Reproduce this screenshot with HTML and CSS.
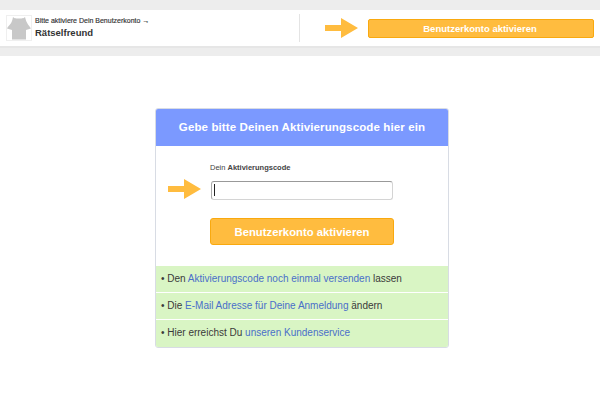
FILE: index.html
```
<!DOCTYPE html>
<html lang="de">
<head>
<meta charset="utf-8">
<title>Benutzerkonto aktivieren</title>
<link rel="stylesheet" href="styles.css">
</head>
<body>
<header class="topband">
  <div class="bar">
    <div class="user">
      <div class="avatar">
        <svg viewBox="0 0 24 24" width="24" height="24"><path fill="#c8c8c8" d="M6 1c1 1 2 1.5 6 1.5S17 2 18 1q1 5 3 7.5t3 4l-5 1.5v9.500H5V14L0 12.500q1-2 3-4T6 1z"/></svg>
      </div>
      <div class="user-text">
        <div class="notice">Bitte aktiviere Dein Benutzerkonto →</div>
        <div class="name">Rätselfreund</div>
      </div>
    </div>
    <div class="cta">
      <svg class="arrow" viewBox="0 0 33 20" width="33" height="20"><path fill="#ffbc3f" d="M0 7h16V0l17 10-17 10v-7H0z"/></svg>
      <button class="btn btn-small" type="button">Benutzerkonto aktivieren</button>
    </div>
  </div>
</header>
<main class="page">
  <section class="card">
    <h1 class="card-title">Gebe bitte Deinen Aktivierungscode hier ein</h1>
    <form class="card-form">
      <label class="label" for="code">Dein <b>Aktivierungscode</b></label>
      <div class="field-row">
        <svg class="arrow field-arrow" viewBox="0 0 33 20" width="33" height="20"><path fill="#ffbc3f" d="M0 7h16V0l17 10-17 10v-7H0z"/></svg>
        <div class="input" id="code"><span class="caret"></span></div>
      </div>
      <button class="btn btn-large" type="button">Benutzerkonto aktivieren</button>
    </form>
    <ul class="links">
      <li>• Den <a href="#">Aktivierungscode noch einmal versenden</a> lassen</li>
      <li>• Die <a href="#">E-Mail Adresse für Deine Anmeldung</a> ändern</li>
      <li>• Hier erreichst Du <a href="#">unseren Kundenservice</a></li>
    </ul>
  </section>
</main>
</body>
</html>
```
FILE: styles.css
```
* { box-sizing: border-box; }
html, body { margin: 0; padding: 0; }
body {
  width: 600px;
  height: 400px;
  overflow: hidden;
  background: #fff;
  font-family: "Liberation Sans", Arial, sans-serif;
  color: #333;
}
.topband {
  background: #ededed;
  padding-top: 10px;
  height: 56px;
}
.bar {
  height: 38px;
  background: #fff;
  display: flex;
  align-items: center;
  border-bottom: 2px solid #e6e6e6;
}
.user {
  width: 300px;
  height: 28px;
  display: flex;
  align-items: center;
  padding-left: 6px;
  border-right: 1px solid #e4e4e4;
}
.avatar {
  width: 26px;
  height: 26px;
  border: 1px solid #efefef;
  display: flex;
  align-items: center;
  justify-content: center;
  flex: none;
}
.avatar svg { display: block; width: 24px; height: 24px; }
.user-text { margin-left: 3px; padding-bottom: 2px; }
.notice { font-size: 7px; line-height: 9px; color: #333; -webkit-text-stroke: 0.15px #333; }
.name { font-size: 9.5px; line-height: 11px; font-weight: 700; color: #333; margin-top: 2px; }
.cta {
  display: flex;
  align-items: center;
  padding-left: 25px;
}
.arrow { display: block; flex: none; }
.btn {
  font-family: inherit;
  font-weight: 700;
  color: #fff;
  background: #ffbc3f;
  border: 1px solid #f9a90f;
  padding: 0;
}
.btn-small {
  width: 226px;
  height: 19px;
  margin-left: 10px;
  padding-right: 2px;
  font-size: 9.5px;
  border-radius: 2px;
}
.page { display: flex; justify-content: center; padding-top: 52px; }
.card {
  width: 294px;
  border: 1px solid #d8dce4;
  border-radius: 3px;
  overflow: hidden;
  background: #fff;
  margin-left: 4px;
}
.card-title {
  margin: 0;
  height: 37px;
  background: #7b99ff;
  color: #fff;
  font-size: 11.5px;
  line-height: 37px;
  font-weight: 700;
  text-align: center;
  letter-spacing: 0.12px;
}
.card-form {
  display: flex;
  flex-direction: column;
  padding: 17px 0 0 11px;
  height: 120px;
}
.label {
  margin-left: 43px;
  font-size: 7.5px;
  line-height: 9px;
  font-weight: 400;
  color: #444;
}
.field-row {
  display: flex;
  align-items: center;
  margin-top: 8px;
}
.field-arrow { margin-left: 1px; position: relative; top: -1px; }
.input {
  width: 182px;
  height: 19px;
  margin-left: 10px;
  border: 1px solid #d4d4d4;
  border-top-color: #999;
  border-left-color: #aaa;
  border-radius: 3px;
  display: flex;
  align-items: center;
  padding-left: 2px;
}
.caret { display: block; width: 1px; height: 12px; background: #222; }
.btn-large {
  width: 184px;
  height: 27px;
  margin: 18px 0 0 43px;
  font-size: 11.3px;
  border-radius: 3px;
}
.links {
  list-style: none;
  margin: 0;
  padding: 0;
  background: #d9f5c4;
}
.links li {
  height: 27px;
  font-size: 10px;
  line-height: 26px;
  padding-left: 5px;
  color: #3a3a3a;
  border-bottom: 1px solid #fff;
}
.links li:last-child { border-bottom: 0; }
.links a { color: #4a6fc9; text-decoration: none; }
```
